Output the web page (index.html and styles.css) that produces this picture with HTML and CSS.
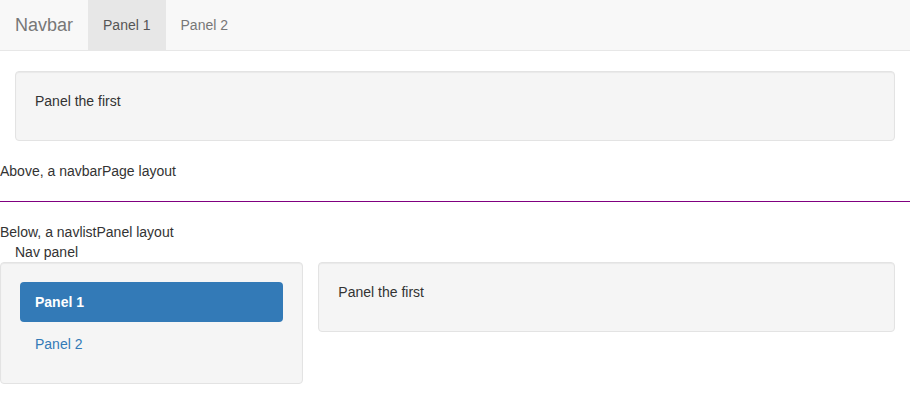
FILE: index.html
```html
<!DOCTYPE html>
<html>
<head>
<meta charset="utf-8">
<link rel="stylesheet" href="styles.css">
</head>
<body>
<nav class="navbar">
  <span class="brand">Navbar</span>
  <ul class="navbar-nav">
    <li class="active"><a>Panel 1</a></li>
    <li><a>Panel 2</a></li>
  </ul>
</nav>
<div class="container">
  <div class="well"><p>Panel the first</p></div>
</div>
<div class="plain">Above, a navbarPage layout</div>
<hr class="divider">
<div class="plain">Below, a navlistPanel layout</div>
<div class="container">
  <div class="title">Nav panel</div>
  <div class="row">
    <div class="col4 well">
      <ul class="pills">
        <li class="active"><a>Panel 1</a></li>
        <li><a>Panel 2</a></li>
      </ul>
    </div>
    <div class="col8">
      <div class="well"><p>Panel the first</p></div>
    </div>
  </div>
</div>
</body>
</html>
```
FILE: styles.css
```css
* { box-sizing: border-box; }
body {
  margin: 0;
  font-family: "Liberation Sans", Arial, sans-serif;
  font-size: 14px;
  line-height: 20px;
  color: #333;
  background: #fff;
}
.navbar {
  display: flex;
  height: 51px;
  background: #f8f8f8;
  border-bottom: 1px solid #e7e7e7;
  margin-bottom: 20px;
}
.brand {
  padding: 15px;
  font-size: 18px;
  line-height: 20px;
  color: #777;
}
.navbar-nav {
  display: flex;
  list-style: none;
  margin: 0;
  padding: 0;
}
.navbar-nav a {
  display: block;
  padding: 15px;
  color: #777;
}
.navbar-nav .active a {
  background: #e7e7e7;
  color: #555;
}
.container {
  padding: 0 15px;
}
.well {
  background: #f5f5f5;
  border: 1px solid #e3e3e3;
  border-radius: 4px;
  padding: 19px;
  margin-bottom: 20px;
  box-shadow: inset 0 1px 1px rgba(0,0,0,0.05);
}
.well p { margin: 0 0 10px; }
.plain { }
.divider {
  margin: 20px 0;
  border: 0;
  border-top: 1px solid purple;
  height: 0;
}
.row {
  display: flex;
  margin: 0 -15px;
}
.col4 {
  width: 33.3333%;
  flex: none;
}
.col8 {
  width: 66.6667%;
  flex: none;
  padding: 0 15px;
}
.pills {
  list-style: none;
  margin: 0;
  padding: 0;
}
.pills li + li { margin-top: 2px; }
.pills a {
  display: block;
  padding: 10px 15px;
  border-radius: 4px;
  color: #337ab7;
}
.pills .active a {
  background: #337ab7;
  color: #fff;
  font-weight: bold;
}
```
